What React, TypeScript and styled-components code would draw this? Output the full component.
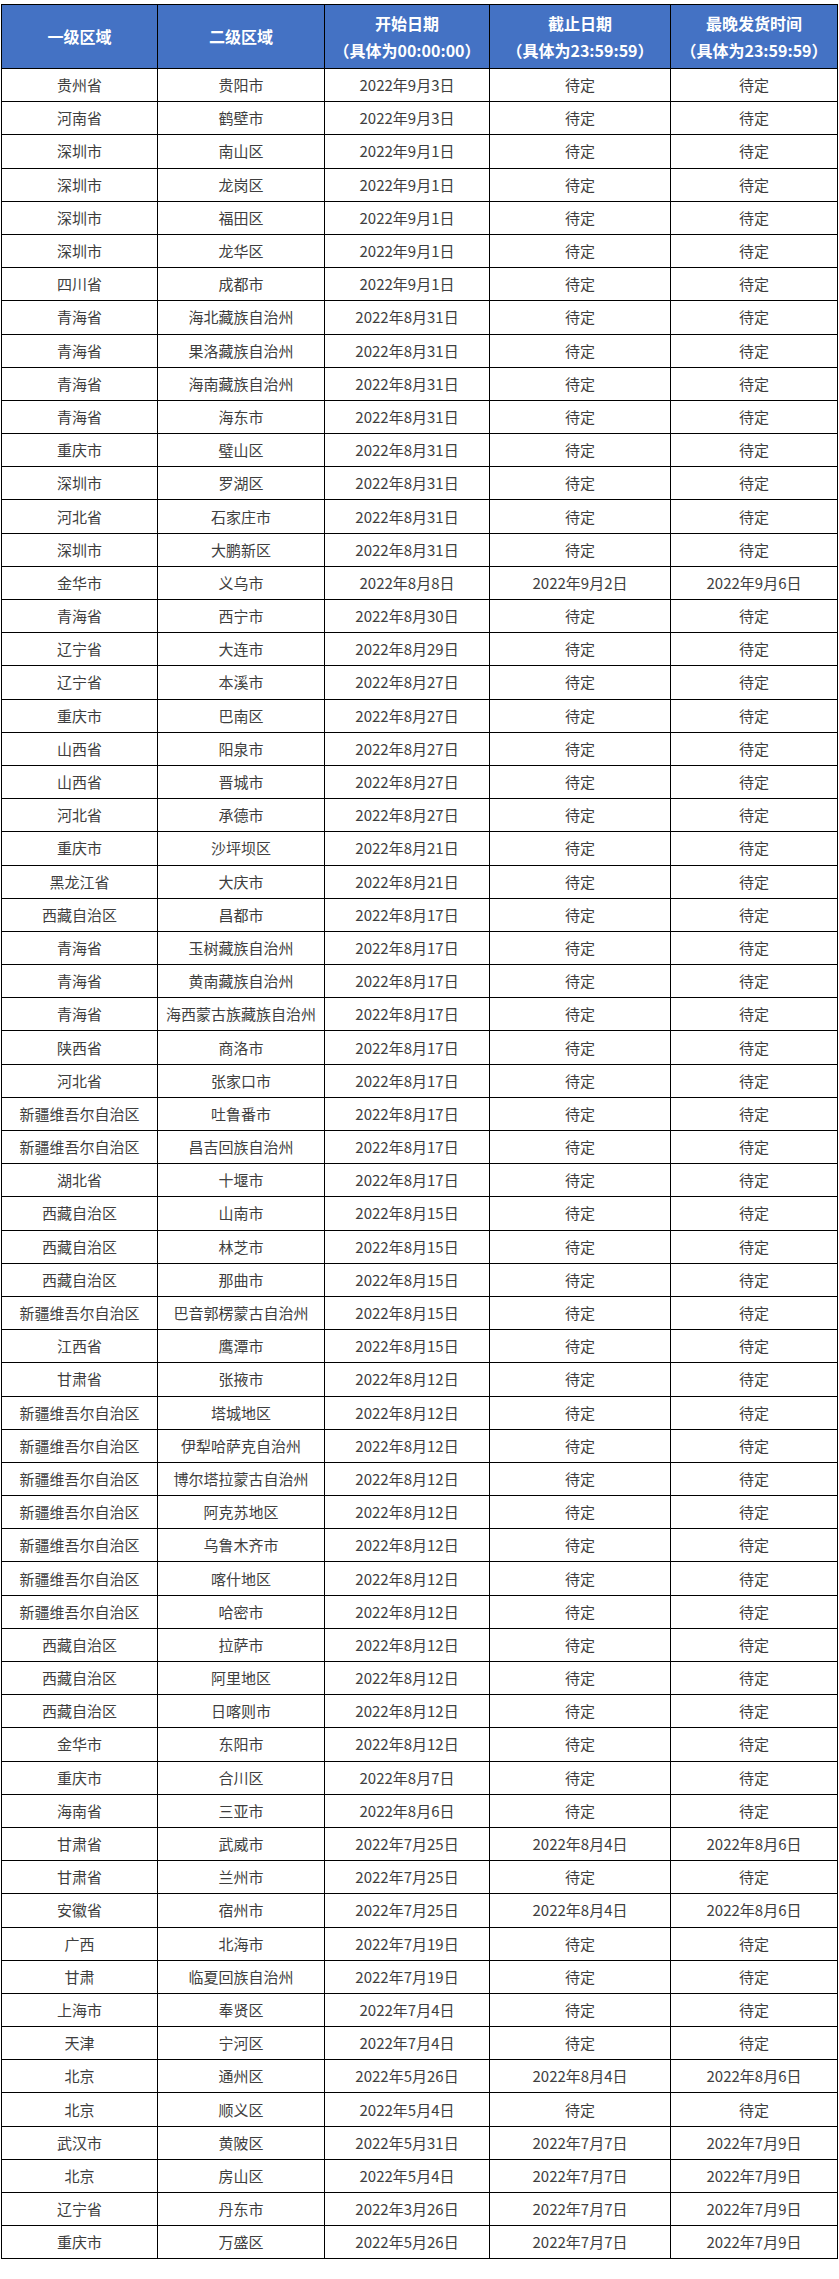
import React from 'react';
import styled, { createGlobalStyle } from 'styled-components';

const GlobalStyle = createGlobalStyle`
  html, body { margin: 0; padding: 0; background: #fff; }
  body { font-family: "Noto Sans CJK SC", "Noto Sans", sans-serif; }
`;

const Page = styled.div`
  padding: 4px 0 19px 1px;
`;

const Table = styled.table`
  border-collapse: collapse;
  table-layout: fixed;
  width: 837px;
  border: 1px solid #000;
`;

const HeadRow = styled.tr`
  height: 64px;
`;

const HeadCell = styled.th`
  background: #4472c4;
  color: #fff;
  border: 1px solid #000;
  font-size: 16px;
  font-weight: 700;
  line-height: 27px;
  text-align: center;
  vertical-align: middle;
  padding: 0 2px;
  white-space: nowrap;
`;

const Row = styled.tr`
  height: 33.2px;
`;

const Cell = styled.td`
  border: 1px solid #000;
  color: #3e3e3e;
  font-size: 15px;
  line-height: 20px;
  text-align: center;
  vertical-align: middle;
  padding: 0 2px;
  white-space: nowrap;
`;

const widths = [156, 167, 165, 181, 167];

const P = '待定';
type R = [string, string, string, string?, string?];

const rows: R[] = [
  ['贵州省', '贵阳市', '2022年9月3日'],
  ['河南省', '鹤壁市', '2022年9月3日'],
  ['深圳市', '南山区', '2022年9月1日'],
  ['深圳市', '龙岗区', '2022年9月1日'],
  ['深圳市', '福田区', '2022年9月1日'],
  ['深圳市', '龙华区', '2022年9月1日'],
  ['四川省', '成都市', '2022年9月1日'],
  ['青海省', '海北藏族自治州', '2022年8月31日'],
  ['青海省', '果洛藏族自治州', '2022年8月31日'],
  ['青海省', '海南藏族自治州', '2022年8月31日'],
  ['青海省', '海东市', '2022年8月31日'],
  ['重庆市', '璧山区', '2022年8月31日'],
  ['深圳市', '罗湖区', '2022年8月31日'],
  ['河北省', '石家庄市', '2022年8月31日'],
  ['深圳市', '大鹏新区', '2022年8月31日'],
  ['金华市', '义乌市', '2022年8月8日', '2022年9月2日', '2022年9月6日'],
  ['青海省', '西宁市', '2022年8月30日'],
  ['辽宁省', '大连市', '2022年8月29日'],
  ['辽宁省', '本溪市', '2022年8月27日'],
  ['重庆市', '巴南区', '2022年8月27日'],
  ['山西省', '阳泉市', '2022年8月27日'],
  ['山西省', '晋城市', '2022年8月27日'],
  ['河北省', '承德市', '2022年8月27日'],
  ['重庆市', '沙坪坝区', '2022年8月21日'],
  ['黑龙江省', '大庆市', '2022年8月21日'],
  ['西藏自治区', '昌都市', '2022年8月17日'],
  ['青海省', '玉树藏族自治州', '2022年8月17日'],
  ['青海省', '黄南藏族自治州', '2022年8月17日'],
  ['青海省', '海西蒙古族藏族自治州', '2022年8月17日'],
  ['陕西省', '商洛市', '2022年8月17日'],
  ['河北省', '张家口市', '2022年8月17日'],
  ['新疆维吾尔自治区', '吐鲁番市', '2022年8月17日'],
  ['新疆维吾尔自治区', '昌吉回族自治州', '2022年8月17日'],
  ['湖北省', '十堰市', '2022年8月17日'],
  ['西藏自治区', '山南市', '2022年8月15日'],
  ['西藏自治区', '林芝市', '2022年8月15日'],
  ['西藏自治区', '那曲市', '2022年8月15日'],
  ['新疆维吾尔自治区', '巴音郭楞蒙古自治州', '2022年8月15日'],
  ['江西省', '鹰潭市', '2022年8月15日'],
  ['甘肃省', '张掖市', '2022年8月12日'],
  ['新疆维吾尔自治区', '塔城地区', '2022年8月12日'],
  ['新疆维吾尔自治区', '伊犁哈萨克自治州', '2022年8月12日'],
  ['新疆维吾尔自治区', '博尔塔拉蒙古自治州', '2022年8月12日'],
  ['新疆维吾尔自治区', '阿克苏地区', '2022年8月12日'],
  ['新疆维吾尔自治区', '乌鲁木齐市', '2022年8月12日'],
  ['新疆维吾尔自治区', '喀什地区', '2022年8月12日'],
  ['新疆维吾尔自治区', '哈密市', '2022年8月12日'],
  ['西藏自治区', '拉萨市', '2022年8月12日'],
  ['西藏自治区', '阿里地区', '2022年8月12日'],
  ['西藏自治区', '日喀则市', '2022年8月12日'],
  ['金华市', '东阳市', '2022年8月12日'],
  ['重庆市', '合川区', '2022年8月7日'],
  ['海南省', '三亚市', '2022年8月6日'],
  ['甘肃省', '武威市', '2022年7月25日', '2022年8月4日', '2022年8月6日'],
  ['甘肃省', '兰州市', '2022年7月25日'],
  ['安徽省', '宿州市', '2022年7月25日', '2022年8月4日', '2022年8月6日'],
  ['广西', '北海市', '2022年7月19日'],
  ['甘肃', '临夏回族自治州', '2022年7月19日'],
  ['上海市', '奉贤区', '2022年7月4日'],
  ['天津', '宁河区', '2022年7月4日'],
  ['北京', '通州区', '2022年5月26日', '2022年8月4日', '2022年8月6日'],
  ['北京', '顺义区', '2022年5月4日'],
  ['武汉市', '黄陂区', '2022年5月31日', '2022年7月7日', '2022年7月9日'],
  ['北京', '房山区', '2022年5月4日', '2022年7月7日', '2022年7月9日'],
  ['辽宁省', '丹东市', '2022年3月26日', '2022年7月7日', '2022年7月9日'],
  ['重庆市', '万盛区', '2022年5月26日', '2022年7月7日', '2022年7月9日'],
];

export default function App() {
  return (
    <Page>
      <GlobalStyle />
      <Table>
        <colgroup>
          {widths.map((w, i) => <col key={i} style={{ width: w }} />)}
        </colgroup>
        <thead>
          <HeadRow>
            <HeadCell>一级区域</HeadCell>
            <HeadCell>二级区域</HeadCell>
            <HeadCell>开始日期<br />（具体为00:00:00）</HeadCell>
            <HeadCell>截止日期<br />（具体为23:59:59）</HeadCell>
            <HeadCell>最晚发货时间<br />（具体为23:59:59）</HeadCell>
          </HeadRow>
        </thead>
        <tbody>
          {rows.map((r, i) => (
            <Row key={i}>
              <Cell>{r[0]}</Cell>
              <Cell>{r[1]}</Cell>
              <Cell>{r[2]}</Cell>
              <Cell>{r[3] || P}</Cell>
              <Cell>{r[4] || P}</Cell>
            </Row>
          ))}
        </tbody>
      </Table>
    </Page>
  );
}
